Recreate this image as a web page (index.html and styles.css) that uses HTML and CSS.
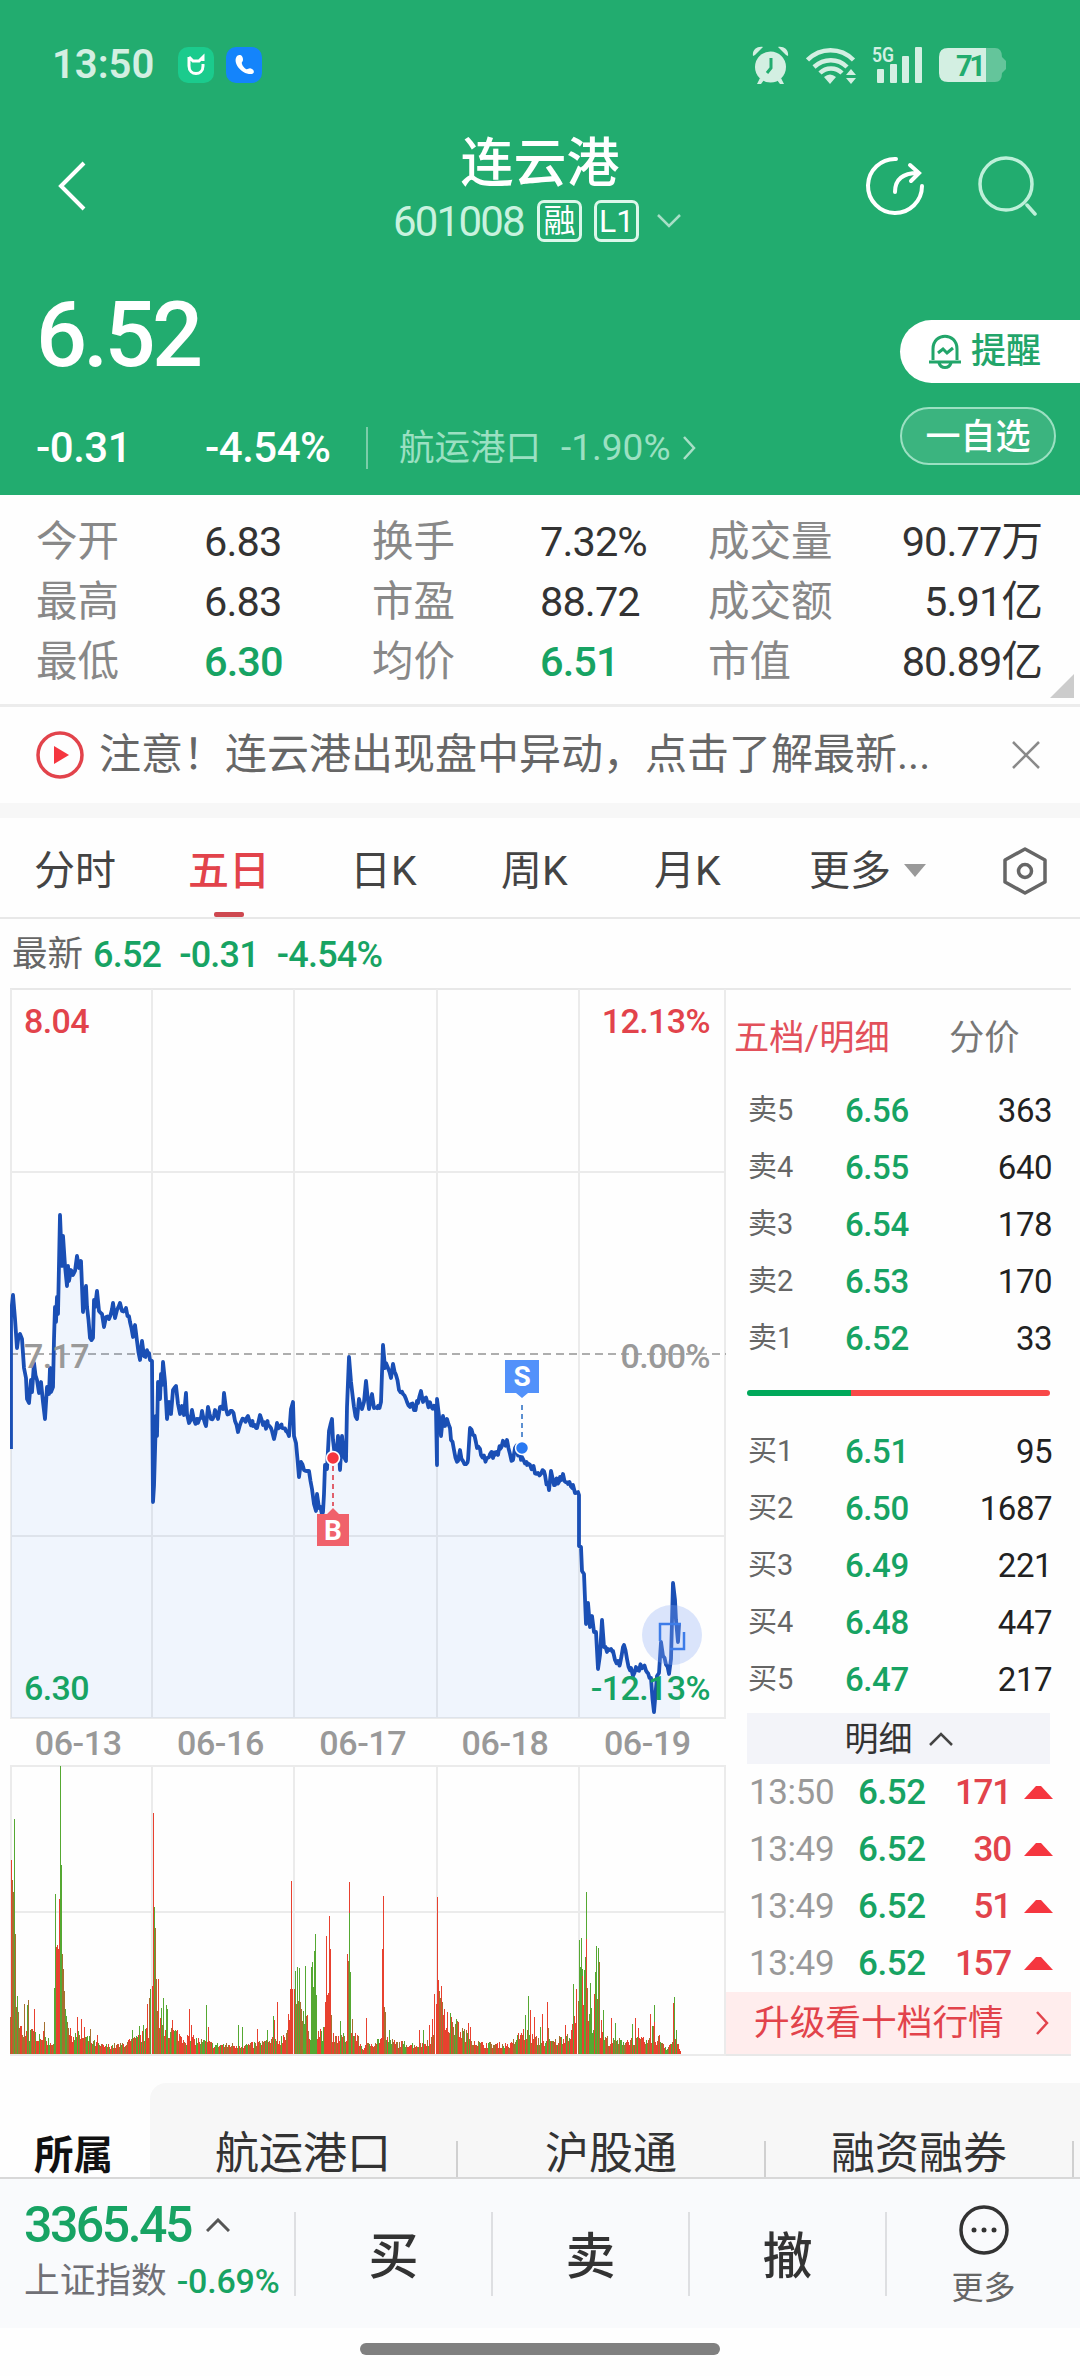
FILE: index.html
```html
<!DOCTYPE html>
<html lang="zh-CN">

<head>
    <meta charset="UTF-8">
    <title>连云港 601008</title>
    <link rel="stylesheet" href="styles.css">
</head>

<body>
    <header class="top">
        <div class="status">
            <span class="clock">13:50</span>
            <svg class="app-icon" width="36" height="36" viewBox="0 0 36 36">
                <rect width="36" height="36" rx="10" fill="#1bcb8d" />
                <path d="M11 10v9c0 10 14 10 14 0v-2M11 10l4 4h6l4-4v4" fill="none" stroke="#fff" stroke-width="3" />
            </svg>
            <svg class="app-icon" width="36" height="36" viewBox="0 0 36 36">
                <rect width="36" height="36" rx="10" fill="#1484fb" />
                <path d="M11 9c-5 6 4 19 15 18 3-1 2-4 0-5-3-2-4 1-6 0s-5-5-4-7c2-1 1-7-2-7-1 0-2 0-3 1z" fill="#fff" />
            </svg>
            <div class="status-right">
                <svg width="37" height="38" viewBox="0 0 37 38" fill="#d3efe2">
                    <circle cx="18.500" cy="21" r="15.500" />
                    <path d="M1 10C0 4 5 0 11 1L3 9zM36 10c1-6-4-10-10-9l8 8zM8 32l-3 6h4l3-4zM29 32l3 6h-4l-3-4z" />
                    <path d="M19 12v10l-4 5" fill="none" stroke="#22ac6f" stroke-width="3" />
                </svg>
                <svg class="wifi" width="51" height="37" viewBox="0 0 51 37" fill="none" stroke="#d3efe2" stroke-width="4.500">
                    <path d="M1.500 13c13-13 33-13 46 0M8 20c10-9 24-9 33 0M14 26c6-6 16-6 22 0" />
                    <path d="M18 30q6-5 12 0l-6 7zM40 28l5-6 5 6zM40 31l5 6 5-6z" fill="#d3efe2" stroke="none" />
                </svg>
                <svg class="signal" width="52" height="42" viewBox="-2 -4 52 42" fill="#d3efe2">
                    <rect x="5" y="23" width="7" height="14" rx="1" />
                    <rect x="18" y="18" width="7" height="19" rx="1" />
                    <rect x="30" y="10" width="7" height="27" rx="1" />
                    <rect x="43" y="1" width="7" height="36" rx="1" />
                    <text x="0" y="16" font-size="20" font-weight="600" textLength="22" lengthAdjust="spacingAndGlyphs">5G</text>
                </svg>
                <svg class="battery" width="67" height="34" viewBox="0 0 67 34">
                    <path d="M47 0h9q7 0 7 9l4 4v8l-4 4q0 9-7 9h-9z" fill="#64c59b" />
                    <path d="M9 0h38v34H9q-9 0-9-9V9q0-9 9-9z" fill="#d3efe2" />
                    <text x="17" y="28" font-size="29" font-weight="700" fill="#22ac6f" textLength="30">71</text>
                </svg>
            </div>
        </div>

        <nav class="nav">
            <svg class="back" width="28" height="50" viewBox="0 0 28 50" fill="none" stroke="#fff" stroke-width="4">
                <path d="M26 2L3 25l23 23" />
            </svg>
            <div class="name">
                <h1>连云港</h1>
                <div class="code">
                    <span>601008</span>
                    <b>融</b>
                    <b>L1</b>
                    <svg width="24" height="14" viewBox="0 0 24 14" fill="none" stroke="#a8dfc7" stroke-width="2.500">
                        <path d="M1 1l11 11L23 1" />
                    </svg>
                </div>
            </div>
            <svg class="share" width="60" height="60" viewBox="0 0 60 60" fill="none" stroke="#fff" stroke-width="4" stroke-linecap="round">
                <path d="M31 3a27 27 0 1 0 26 27" />
                <path d="M30 36c0-13 8-19 23-19M45 9l9 8-8 8" />
            </svg>
            <svg class="search" width="60" height="60" viewBox="0 0 60 60" fill="none" stroke="#bdf0d9" stroke-width="3.500" stroke-linecap="round">
                <circle cx="28" cy="28" r="26" />
                <path d="M49 49l8 9" />
            </svg>
        </nav>

        <div class="quote">
            <div>
                <div class="price">6.52</div>
                <div class="change">
                    <span>-0.31</span>
                    <span>-4.54%</span>
                    <a class="sector">航运港口<i>-1.90%</i>
                        <svg width="14" height="24" viewBox="0 0 14 24" fill="none" stroke="#a8dfc7" stroke-width="2.500">
                            <path d="M2 1l10 11L2 23" />
                        </svg>
                    </a>
                </div>
            </div>
            <div class="quote-actions">
                <a class="remind">
                    <svg width="34" height="36" viewBox="0 0 34 36" fill="none" stroke="#22a56a" stroke-width="3">
                        <path d="M5 26V15C5 -2 29 -2 29 15V26M1 28h32M11 29c2 6 10 6 12 0M10 19l5-4 4 4 6-5" />
                    </svg>提醒
                </a>
                <a class="favorite">一自选</a>
            </div>
        </div>
    </header>

    <section class="stats">
        <span>今开</span><b>6.83</b><span>换手</span><b>7.32%</b><span>成交量</span><b class="last">90.77万</b>
        <span>最高</span><b>6.83</b><span>市盈</span><b>88.72</b><span>成交额</span><b class="last">5.91亿</b>
        <span>最低</span><b class="green">6.30</b><span>均价</span><b class="green">6.51</b><span>市值</span><b class="last">80.89亿</b>
    </section>

    <section class="notice">
        <svg width="48" height="48" viewBox="0 0 48 48">
            <circle cx="24" cy="24" r="22" fill="none" stroke="#e2434b" stroke-width="3.500" />
            <path d="M18 15l15 9-15 9z" fill="#f5363f" />
        </svg>
        <p>注意！连云港出现盘中异动，点击了解最新...</p>
        <svg width="28" height="28" viewBox="0 0 28 28" stroke="#8a8a8a" stroke-width="2.500">
            <path d="M1 1l26 26M27 1L1 27" />
        </svg>
    </section>

    <nav class="tabs">
        <a>分时</a>
        <a class="active">五日</a>
        <a>日K</a>
        <a>周K</a>
        <a>月K</a>
        <a class="more">更多</a>
        <svg width="44" height="48" viewBox="0 0 44 48" fill="none" stroke="#666" stroke-width="3.500" stroke-linejoin="round">
            <path d="M22 2l20 11v22L22 46 2 35V13z" />
            <circle cx="22" cy="24" r="6.500" />
        </svg>
    </nav>

    <div class="latest"><span>最新</span><b>6.52</b><b>-0.31</b><b>-4.54%</b></div>

    <main class="market">
        <div class="charts">
            <svg id="price" width="716" height="730" viewBox="0 0 716 730">
                <path class="grid" d="M1 0V729M142 0V729M284 0V729M427 0V729M569 0V729M715 0V729M0 183H715M0 547H715M0 729H716" />
                <path class="mid" d="M0 365H716" />
                <path id="area" />
                <path id="line" />

                <circle cx="662" cy="646" r="30" fill="#89a9f6" fill-opacity=".3" />
                <path d="M650 652v-17h21M660 660h14v-17" fill="none" stroke="#3d7ce8" stroke-width="2.500" />

                <path class="dash-b" d="M323 477v40" />
                <circle cx="323" cy="469" r="6.500" fill="#f4363f" stroke="#fff" stroke-width="1.500" />
                <path d="M307 525h10l6-6 6 6h10v32h-32z" fill="#f0616b" />
                <text class="tag" x="323" y="551">B</text>

                <path class="dash-s" d="M512 416v36" />
                <circle cx="512" cy="459" r="6.500" fill="#2979f2" stroke="#fff" stroke-width="1.500" />
                <path d="M495 371h34v33h-11l-6 5-6-5h-11z" fill="#5291fa" />
                <text class="tag" x="512" y="397">S</text>

                <text class="label red" x="14" y="44">8.04</text>
                <text class="label red end" x="700" y="44">12.13%</text>
                <text class="label" x="14" y="379">7.17</text>
                <text class="label end" x="700" y="379">0.00%</text>
                <text class="label green" x="14" y="711">6.30</text>
                <text class="label green end" x="700" y="711">-12.13%</text>
            </svg>
            <div class="dates">
                <span>06-13</span><span>06-16</span><span>06-17</span><span>06-18</span><span>06-19</span>
            </div>
            <svg id="volume" width="716" height="291" viewBox="0 0 716 291">
                <path class="grid" d="M0 1H716M0 147H716M0 290H716M1 0V290M142 0V290M284 0V290M427 0V290M569 0V290M715 0V290" />
            </svg>
        </div>

        <aside class="book">
            <div class="book-tabs"><a class="active">五档/明细</a><a>分价</a></div>
            <div class="order"><span>卖5</span><b>6.56</b><em>363</em></div>
            <div class="order"><span>卖4</span><b>6.55</b><em>640</em></div>
            <div class="order"><span>卖3</span><b>6.54</b><em>178</em></div>
            <div class="order"><span>卖2</span><b>6.53</b><em>170</em></div>
            <div class="order"><span>卖1</span><b>6.52</b><em>33</em></div>
            <div class="ratio"></div>
            <div class="order"><span>买1</span><b>6.51</b><em>95</em></div>
            <div class="order"><span>买2</span><b>6.50</b><em>1687</em></div>
            <div class="order"><span>买3</span><b>6.49</b><em>221</em></div>
            <div class="order"><span>买4</span><b>6.48</b><em>447</em></div>
            <div class="order"><span>买5</span><b>6.47</b><em>217</em></div>
            <div class="detail-head">明细
                <svg width="24" height="14" viewBox="0 0 24 14" fill="none" stroke="#444" stroke-width="2.500">
                    <path d="M1 13L12 2l11 11" />
                </svg>
            </div>
            <div class="trade"><span>13:50</span><b>6.52</b><em>171</em></div>
            <div class="trade"><span>13:49</span><b>6.52</b><em>30</em></div>
            <div class="trade"><span>13:49</span><b>6.52</b><em>51</em></div>
            <div class="trade"><span>13:49</span><b>6.52</b><em>157</em></div>
            <a class="upgrade">升级看十档行情
                <svg width="14" height="24" viewBox="0 0 14 24" fill="none" stroke="#e2434b" stroke-width="2.500">
                    <path d="M2 1l10 11L2 23" />
                </svg>
            </a>
        </aside>
    </main>

    <div class="belong">
        <b>所属</b>
        <div class="belong-list"><a>航运港口</a><a>沪股通</a><a>融资融券</a></div>
    </div>

    <footer class="bottom">
        <div class="index">
            <div class="index-value">3365.45
                <svg width="24" height="14" viewBox="0 0 24 14" fill="none" stroke="#555" stroke-width="3">
                    <path d="M1 13L12 2l11 11" />
                </svg>
            </div>
            <div class="index-name">上证指数<b>-0.69%</b></div>
        </div>
        <a>买</a>
        <a>卖</a>
        <a>撤</a>
        <div class="bottom-more">
            <svg width="50" height="52" viewBox="0 0 50 52" fill="#333">
                <circle cx="25" cy="26" r="23" fill="none" stroke="#333" stroke-width="3.500" />
                <circle cx="15" cy="26" r="2.500" />
                <circle cx="25" cy="26" r="2.500" />
                <circle cx="35" cy="26" r="2.500" />
            </svg>
            更多
        </div>
    </footer>
    <div class="home"></div>

    <script src="chart.js"></script>
</body>

</html>
```
FILE: styles.css
```css
* {
    box-sizing: border-box;
}

body {
    margin: 0;
    width: 1080px;
    height: 2376px;
    overflow: hidden;
    background: #fefefe;
    color: #333;
    font-family: Roboto, "Noto Sans CJK SC", sans-serif;
}

svg {
    display: block;
    flex: none;
}

b, i, em {
    font-style: normal;
    font-weight: 500;
}

.green { color: #17a363; }
.red { color: #e2434b; }

/* header */
.top {
    height: 495px;
    background: #22ac6f;
    color: #fff;
}

.status {
    display: flex;
    align-items: center;
    height: 130px;
    padding-left: 52px;
    color: #d3efe2;
}

.clock {
    width: 126px;
    margin-top: -2px;
    font-size: 40px;
    font-weight: 600;
}

.app-icon {
    margin-right: 12px;
}

.status-right {
    display: flex;
    align-items: center;
    margin-left: auto;
    margin-right: 74px;
}

.wifi { margin-left: 17px; }
.signal { margin: -4px 0 0 13px; }
.battery { margin-left: 17px; }

.nav {
    display: grid;
    grid-template-columns: 335px 375px 113px 60px;
    height: 118px;
    padding-left: 58px;
}

.back { margin-top: 31px; }
.share { margin-top: 26px; margin-left: 97px; }
.search { margin-top: 26px; margin-left: 97px; }

.name h1 {
    margin: 0;
    width: 294px;
    font-size: 53px;
    font-weight: 500;
    line-height: 68px;
    text-align: center;
}

.code {
    display: flex;
    align-items: center;
    height: 42px;
    margin-top: 2px;
    font-size: 42px;
    color: #c9f2df;
}

.code span {
    width: 144px;
    letter-spacing: -1.8px;
}

.code b {
    display: flex;
    justify-content: center;
    width: 45px;
    height: 42px;
    margin-right: 12px;
    border: 3px solid #dcf7ea;
    border-radius: 7px;
    color: #fff;
    font-size: 32px;
    font-weight: 400;
    line-height: 36px;
}

.code svg {
    margin-left: 6px;
}

.quote {
    display: flex;
    justify-content: space-between;
    padding-left: 36px;
}

.price {
    margin-top: 36px;
    font-size: 90px;
    font-weight: 500;
    line-height: 104px;
    letter-spacing: -3.8px;
}

.change {
    display: grid;
    grid-template-columns: 169px 161px auto;
    align-items: center;
    height: 42px;
    margin-top: 35px;
    font-size: 42px;
    letter-spacing: -.5px;
    font-weight: 500;
}

.sector {
    display: flex;
    align-items: center;
    height: 42px;
    padding-left: 31px;
    border-left: 2px solid #7bcda9;
    color: #9be0c2;
    font-size: 35.500px;
    font-weight: 400;
    line-height: 42px;
    letter-spacing: 0;
}

.sector i {
    margin: 0 12px 0 20px;
    font-size: 37px;
    font-weight: 400;
    letter-spacing: 0;
}

.quote-actions {
    width: 180px;
    padding-top: 72px;
    font-size: 35px;
}

.remind {
    display: flex;
    align-items: center;
    height: 63px;
    padding-left: 28px;
    gap: 9px;
    border-radius: 32px 0 0 32px;
    background: #fff;
    color: #22a56a;
    font-weight: 500;
    line-height: 58px;
}

.favorite {
    display: block;
    width: 156px;
    height: 58px;
    margin-top: 24px;
    border: 2px solid #9be0c2;
    border-radius: 30px;
    background: #3bb47f;
    line-height: 58px;
    text-align: center;
    font-weight: 500;
}

/* numbers under the header */
.stats {
    position: relative;
    display: grid;
    grid-template-columns: 168px 168px 168px 168px 130px 204px;
    grid-auto-rows: 60px;
    height: 212px;
    padding: 17px 0 0 36px;
    border-bottom: 3px solid #ececec;
    line-height: 60px;
    font-size: 41.500px;
}

.stats::after {
    content: "";
    position: absolute;
    right: 6px;
    bottom: 6px;
    border-left: 24px solid transparent;
    border-bottom: 24px solid #ccc;
}

.stats span {
    color: #888;
}

.stats b {
    letter-spacing: -.9px;
    white-space: nowrap;
    font-weight: 400;
}

.stats b.green {
    font-weight: 500;
}

.stats .last {
    text-align: right;
}

.notice {
    display: flex;
    align-items: center;
    height: 96px;
    padding-left: 36px;
}

.notice p {
    width: 911px;
    margin: 0;
    padding-left: 15px;
    font-size: 42px;
    line-height: 60px;
    color: #666;
    white-space: nowrap;
}

.notice p + svg {
    margin-left: 17px;
}

.tabs {
    display: grid;
    grid-template-columns: 154px 162px 151px 153px 155px 194px 44px;
    align-items: center;
    height: 116px;
    padding: 6px 0 0 34px;
    border-top: 15px solid #f7f7f7;
    border-bottom: 2px solid #e8e8e8;
    font-size: 41px;
    line-height: 60px;
    color: #444;
}

.tabs .active {
    position: relative;
    color: #e2434b;
    font-weight: 500;
}

.tabs .active::after {
    content: "";
    position: absolute;
    left: 26px;
    top: 71px;
    width: 30px;
    height: 5px;
    border-radius: 2px;
    background: #ce4850;
}

.tabs .more {
    display: flex;
    align-items: center;
    gap: 13px;
}

.tabs .more::after {
    content: "";
    border: 11px solid transparent;
    border-top: 13px solid #999;
    border-bottom: 0;
}

.latest {
    display: flex;
    align-items: center;
    height: 69px;
    padding-left: 12px;
    font-size: 35.500px;
    line-height: 60px;
    color: #666;
}

.latest b {
    margin: 2px 8px 0 10px;
    font-size: 36px;
    letter-spacing: -.8px;
    color: #17a363;
}

/* charts and order book */
.market {
    display: flex;
    width: 1061px;
    height: 1068px;
    margin-left: 10px;
    border-top: 2px solid #e8e8e8;
    border-bottom: 2px solid #e8e8e8;
}

.charts {
    width: 716px;
    margin-top: -1px;
}

.grid {
    fill: none;
    stroke: #ebebeb;
    stroke-width: 2;
}

.mid {
    stroke: #949494;
    stroke-width: 1.500;
    stroke-dasharray: 8 5;
}

#area { fill: #4a8cf7; fill-opacity: .08; }

#line {
    fill: none;
    stroke: #1a4fb5;
    stroke-width: 3.800;
    stroke-linejoin: round;
}

.dash-b { stroke: #e0606c; stroke-width: 2; stroke-dasharray: 5 4; }
.dash-s { stroke: #5b8fd0; stroke-width: 2; stroke-dasharray: 5 4; }

.tag {
    fill: #fff;
    font-size: 28px;
    font-weight: 700;
    text-anchor: middle;
}

.label {
    fill: #999;
    font-size: 34px;
    font-weight: 500;
    letter-spacing: -.6px;
}

.label.red { fill: #e2434b; }
.label.green { fill: #17a363; }
.label.end { text-anchor: end; }

.dates {
    display: flex;
    height: 46px;
    margin-left: -3px;
    line-height: 48px;
    font-size: 34px;
    font-weight: 500;
    letter-spacing: -.4px;
    color: #999;
}

.dates span {
    width: 142.300px;
    text-align: center;
}

.book {
    width: 345px;
    padding-top: 13px;
}

.book-tabs {
    display: flex;
    height: 79px;
    padding-left: 8px;
    line-height: 70px;
    font-size: 35.300px;
    color: #777;
}

.book-tabs a:first-child {
    width: 215px;
    color: #e2505a;
}

.order {
    display: grid;
    grid-template-columns: 97px 80px 127px;
    height: 57px;
    margin-left: 22px;
    line-height: 57px;
    font-size: 33px;
}

.order span {
    font-size: 29px;
    color: #666;
}

.order b {
    color: #17a363;
    letter-spacing: -.4px;
}

.order em {
    text-align: right;
    font-weight: 400;
    letter-spacing: -.5px;
    color: #222;
}

.ratio {
    width: 303px;
    height: 6px;
    margin: 23px 0 27px 21px;
    border-radius: 3px;
    background: linear-gradient(90deg, #00a85a 104px, #f84848 104px);
}

.detail-head {
    display: flex;
    align-items: center;
    justify-content: center;
    gap: 16px;
    width: 303px;
    height: 51px;
    margin: 5px 0 0 21px;
    background: #f3f4f9;
    font-size: 34px;
    line-height: 48px;
}

.trade {
    display: grid;
    grid-template-columns: 109px 80px 73px 42px;
    align-items: center;
    height: 57px;
    margin-left: 23px;
    font-size: 35px;
    letter-spacing: -.4px;
}

.trade span { color: #999; }
.trade b { color: #17a363; }
.trade em { color: #e2434b; text-align: right; letter-spacing: -1.200px; }

.trade::after {
    content: "";
    margin-left: 13px;
    border: 12px solid transparent;
    border-bottom: 13px solid #f5363f;
    border-top: 0;
}

.upgrade {
    display: flex;
    align-items: center;
    justify-content: space-between;
    height: 62px;
    padding: 0 22px 0 28px;
    background: #ffeded;
    color: #e2434b;
    font-size: 35.700px;
    line-height: 58px;
}

.belong {
    display: flex;
    height: 94px;
    margin-top: 27px;
}

.belong > b {
    width: 150px;
    padding: 43px 0 0 34px;
    font-size: 39.500px;
    font-weight: 700;
    line-height: 60px;
    color: #111;
}

.belong-list {
    display: flex;
    flex: 1;
    padding-top: 58px;
    border-radius: 16px 0 0 0;
    background: #f7f7f7;
}

.belong-list a {
    width: 308px;
    height: 36px;
    border-right: 2px solid #d0d0d0;
    font-size: 44px;
    line-height: 26px;
    text-align: center;
}

.bottom {
    display: flex;
    height: 151px;
    padding-top: 33px;
    border-top: 2px solid #d8d8d8;
    background: #f9fafc;
}

.index {
    width: 294px;
    padding-left: 24px;
}

.index-value {
    display: flex;
    align-items: center;
    gap: 15px;
    height: 26px;
    font-size: 50px;
    font-weight: 500;
    letter-spacing: -2.500px;
    color: #17a363;
}

.index-name {
    height: 40px;
    margin-top: 23px;
    line-height: 40px;
    font-size: 35.700px;
    color: #707076;
    white-space: nowrap;
}

.index-name b {
    margin-left: 10px;
    font-size: 34px;
    letter-spacing: -.2px;
    color: #17a363;
}

.bottom > a {
    width: 197px;
    height: 84px;
    border-left: 2px solid #dedfe2;
    font-size: 50px;
    font-weight: 500;
    line-height: 91px;
    text-align: center;
}

.bottom-more {
    display: flex;
    flex-direction: column;
    align-items: center;
    width: 195px;
    height: 84px;
    border-left: 2px solid #dedfe2;
    font-size: 32px;
    line-height: 64px;
    color: #666;
}

.bottom-more svg {
    margin-top: -8px;
}

.home {
    width: 360px;
    height: 12px;
    margin: 15px auto 0;
    border-radius: 6px;
    background: #808080;
}
```
FILE: chart.js
```js
// x,y pairs in chart pixels
const prices = `1,460 1,325 3,306 5,330 7,359 10,345 12,350 14,379 16,389 17,410 19,414 21,391 22,403 24,374 27,391 29,404 31,393 33,413 35,430 37,398 39,405 40,379 41,403 43,398 44,350 45,318 46,333 47,308 48,325 50,226 52,277 53,247 55,277 57,297 58,277 59,292 61,281 63,286 65,282 67,267 69,279 71,272 73,323 76,297 77,318 80,349 83,349 84,311 85,318 87,302 89,322 92,325 94,338 96,328 99,330 103,314 105,329 107,321 110,314 112,322 116,319 120,333 123,348 125,336 127,352 130,371 132,352 134,367 139,364 140,371 142,372 143,513 144,497 146,427 147,447 148,393 150,410 151,385 152,396 153,373 155,393 157,430 159,413 161,425 163,401 166,397 168,415 170,425 172,417 174,426 176,404 177,425 179,434 182,421 184,431 188,434 192,422 196,437 198,418 201,430 205,421 208,430 210,418 213,420 214,404 216,420 219,425 222,422 225,432 228,443 231,433 234,430 238,427 243,437 247,439 250,426 253,436 258,436 262,442 264,450 267,434 272,439 276,442 279,447 281,420 283,413 284,447 286,454 289,488 291,473 294,481 297,482 299,482 302,500 304,515 306,522 307,505 309,519 313,523 314,505 315,476 317,480 319,442 322,430 323,451 325,468 327,459 328,447 330,481 332,447 334,468 336,472 337,418 339,368 341,393 343,410 344,418 347,430 349,410 352,420 354,413 356,392 359,420 362,405 364,419 368,417 371,413 372,384 373,356 375,379 376,374 378,379 381,389 383,375 386,386 389,401 393,405 397,413 401,415 404,421 408,414 411,402 413,413 417,412 421,417 426,422 427,476 427,410 429,427 431,447 433,427 435,437 437,430 440,439 441,451 444,461 448,472 450,461 453,472 458,471 460,439 463,446 467,459 471,466 476,471 480,465 485,466 490,460 494,455 497,451 500,465 503,471 505,459 512,468 517,476 522,480 528,484 535,486 539,501 541,482 545,496 550,488 553,485 558,495 563,496 565,504 569,506 569,557 571,558 572,582 574,585 576,635 578,614 580,638 582,627 584,643 586,643 588,680 590,666 592,631 594,658 598,660 603,662 605,671 610,675 614,656 617,670 621,679 623,687 626,678 633,678 638,684 641,689 644,723 647,687 649,684 651,653 653,667 659,685 661,670 663,594 665,611 666,631 668,653 669,636`
    .split(' ').map(p => p.split(',').map(Number));

let seed = 7;
function rand() {
    seed = (seed * 16807) % 2147483647;
    return seed / 2147483647;
}

// small ticks between the points
let d = '';
prices.forEach(([x, y], i) => {
    const prev = prices[i - 1];
    if (prev && x - prev[0] > 2) {
        for (let px = prev[0] + 1.5; px < x; px += 1.5) {
            const t = (px - prev[0]) / (x - prev[0]);
            d += `L${px} ${(prev[1] + (y - prev[1]) * t + (rand() - 0.5) * 9).toFixed(1)}`;
        }
    }
    d += (i ? 'L' : 'M') + x + ' ' + y;
});
document.getElementById('line').setAttribute('d', d);
document.getElementById('area').setAttribute('d', d + 'L670 636V729H1Z');

// typical volume height along the x axis
const base = [[0, 35], [10, 25], [20, 20], [30, 20], [40, 12], [60, 20], [75, 16], [90, 8], [110, 9], [125, 14], [135, 20], [150, 28], [160, 24], [175, 16], [190, 13], [205, 9], [220, 9], [240, 9], [255, 12], [270, 14], [280, 30], [290, 40], [300, 22], [312, 22], [325, 15], [345, 20], [352, 6], [372, 16], [385, 11], [410, 9], [422, 16], [430, 32], [445, 28], [460, 16], [470, 10], [500, 9], [512, 22], [530, 12], [545, 12], [560, 22], [575, 35], [590, 20], [600, 12], [625, 14], [640, 12], [650, 16], [656, 6], [665, 16], [670, 3]];

// x, height, colour of the tall bars
const spikes = `1,194r 2,174b 3,162b 4,235g 5,120b 6,47b 7,58g 8,42b 14,50b 17,49g 18,54b 24,45r 34,32b 44,66g 45,160g 46,107r 47,109r 48,105r 49,155r 50,288g 51,189g 52,100b 53,85b 54,63b 55,45g 56,38g 57,32b 58,26b 67,37r 71,35r 74,27r 80,25b 87,19r 122,24g 129,28g 133,29g 137,50r 139,56b 140,65g 142,68r 143,241r 144,147g 145,126b 146,75b 147,43b 148,75r 150,36r 151,46g 152,29b 153,56g 156,49g 157,45g 162,34r 179,45r 181,29r 196,49g 198,27r 228,29g 232,27g 247,25r 257,24g 263,38g 264,34r 267,52r 278,40r 279,34r 280,65r 281,173r 282,65r 284,65r 285,83g 286,50b 287,87g 288,53b 289,86g 290,52b 291,45b 295,88g 297,39r 301,87g 302,92g 303,67g 304,103g 305,120g 306,59g 315,52r 316,118r 317,59r 318,61r 319,138r 320,105r 321,39b 330,33g 337,100r 338,93b 339,172r 339,141g 340,82g 342,35b 356,36r 372,105r 373,158r 374,47b 375,42b 379,24g 409,24r 413,24g 419,29r 422,35r 424,60r 426,50r 427,157r 428,74r 429,63b 430,56b 431,68r 432,52b 434,45r 437,42r 440,41g 442,32b 446,35g 448,32r 458,31r 460,27r 515,39g 518,58g 520,44r 524,37r 530,27g 532,40r 537,52r 538,26b 555,29r 563,70g 564,38r 565,31r 566,65r 568,53b 569,114g 570,87g 571,116g 572,85g 572,78r 573,49r 574,84g 575,97g 576,162g 576,115r 577,66b 578,33r 579,40g 580,71g 581,46g 584,60r 585,82g 586,108g 587,55b 588,106g 589,92b 591,34r 593,44g 601,36r 605,31g 622,30g 625,36r 628,26r 640,40r 642,28g 643,28b 644,49g 644,32r 663,51r 664,57g 666,24g`;

const tall = {};
spikes.split(' ').forEach(s => {
    const [x, rest] = s.split(',');
    (tall[x] = tall[x] || []).push([parseInt(rest), rest.slice(-1)]);
});

const volume = document.getElementById('volume');
const colors = { r: '#e8412f', g: '#55a832', b: '#a5702f' };

function bar(x, h, c) {
    const rect = document.createElementNS('http://www.w3.org/2000/svg', 'rect');
    rect.setAttribute('x', x);
    rect.setAttribute('y', 289 - h);
    rect.setAttribute('width', 1);
    rect.setAttribute('height', h);
    rect.setAttribute('fill', colors[c]);
    volume.appendChild(rect);
}

for (let x = 0; x <= 670; x++) {
    if ([141, 283, 425, 567].includes(x)) continue;
    if (tall[x]) {
        tall[x].forEach(([h, c]) => bar(x, h, c));
        continue;
    }
    let k = 1;
    while (k < base.length - 1 && base[k][0] < x) k++;
    const [x0, h0] = base[k - 1];
    const [x1, h1] = base[k];
    const h = (h0 + (h1 - h0) * (x - x0) / (x1 - x0)) * (0.6 + rand() * 0.7);
    const r = rand();
    bar(x, Math.max(3, Math.round(h)), r < 0.5 ? 'r' : r < 0.75 ? 'b' : 'g');
}
```
